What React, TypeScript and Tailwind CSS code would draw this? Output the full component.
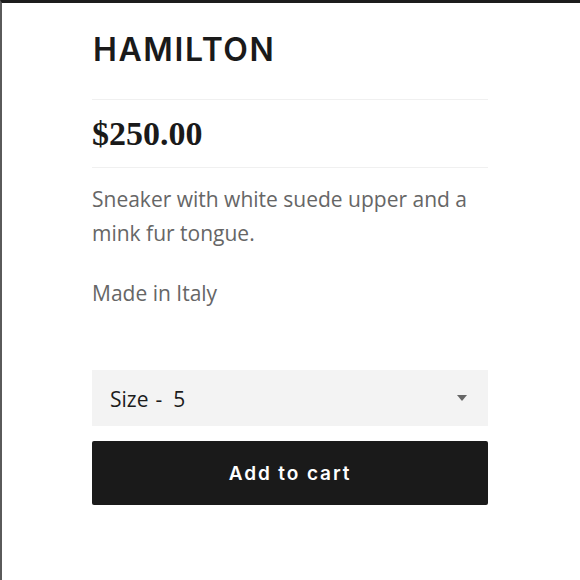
export default function App() {
  return (
    <div className="w-[580px] h-[580px] bg-white border-t-[3px] border-t-[#1c1c1c] border-l-2 border-l-[#5a5a5a] overflow-hidden">
      <div className="ml-[90px] w-[396px] pt-[27px]">
        <h1
          className="text-[32px] leading-[40px] font-semibold tracking-[0.05em] text-[#1a1a1a] pl-[1px]"
          style={{ fontFamily: 'Inter, "Liberation Sans", sans-serif' }}
        >
          HAMILTON
        </h1>
        <div className="mt-[29px] h-px bg-[#f0f0f0]" />
        <div
          className="mt-[14px] text-[34px] leading-[40px] font-bold text-[#1a1a1a]"
          style={{ fontFamily: '"Liberation Serif", serif' }}
        >
          $250.00
        </div>
        <div className="mt-[13px] h-px bg-[#f0f0f0]" />
        <div
          className="mt-[14px] text-[21px] leading-[34px] text-[#666666]"
          style={{ fontFamily: '"Open Sans", sans-serif' }}
        >
          <p>Sneaker with white suede upper and a mink fur tongue.</p>
          <p className="mt-[26px]">Made in Italy</p>
        </div>
        <div
          className="mt-[60px] h-[56px] bg-[#f3f3f3] flex items-center justify-between pl-[18px] pr-[21px] pt-[3px] text-[21px] text-[#1c1c1c]"
          style={{ fontFamily: '"Open Sans", sans-serif' }}
        >
          <div className="flex items-center">
            <span>Size</span>
            <span className="ml-[7px]">-</span>
            <span className="ml-[11px]">5</span>
          </div>
          <svg width="10" height="6" viewBox="0 0 10 6" className="-mt-[3px]">
            <path d="M0 0 L10 0 L5 6 Z" fill="#666666" />
          </svg>
        </div>
        <button
          className="mt-[15px] w-full h-[64px] bg-[#1a1a1a] rounded-[2px] text-white text-[19px] font-semibold tracking-[0.1em] flex items-center justify-center pt-[2px]"
          style={{ fontFamily: 'Inter, "Liberation Sans", sans-serif' }}
        >
          Add to cart
        </button>
      </div>
    </div>
  );
}
